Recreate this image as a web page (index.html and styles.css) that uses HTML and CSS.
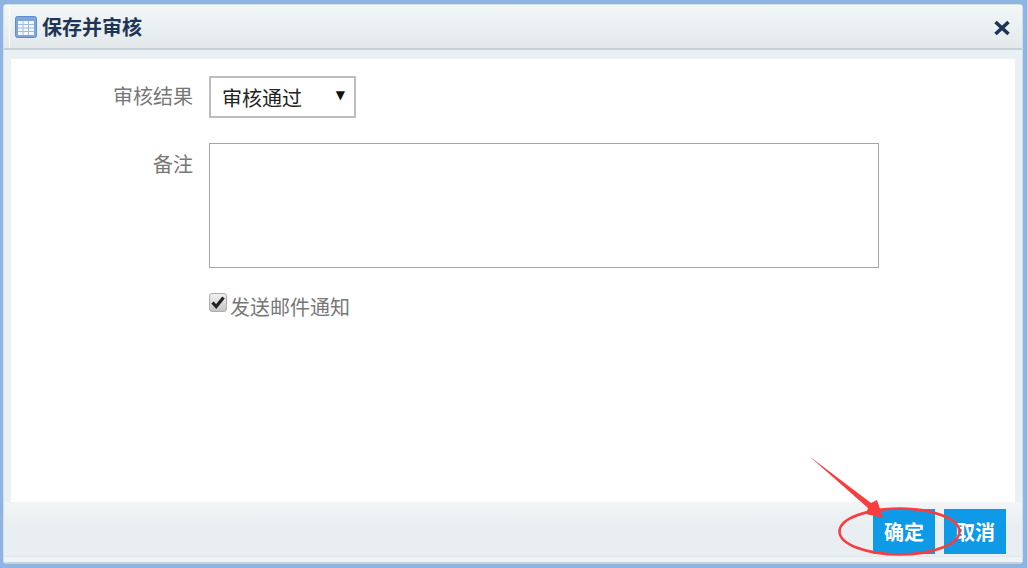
FILE: index.html
```html
<!DOCTYPE html>
<html lang="zh-CN">
<head>
<meta charset="utf-8">
<title>保存并审核</title>
<link rel="stylesheet" href="styles.css">
</head>
<body>
<div class="window">
  <div class="dialog">
    <header class="titlebar">
      <div class="title">
        <svg class="title-icon" width="22" height="22" viewBox="0 0 22 22">
          <rect x="0.5" y="0.5" width="21" height="21" rx="2" fill="#7ea6dd" stroke="#5f8ccb"/>
          <rect x="3" y="5" width="16" height="14" fill="#f4f8fd"/>
          <path d="M3 8.5h16M3 12h16M3 15.5h16M8 5v14M13.5 5v14" stroke="#9dbbe3" stroke-width="1" fill="none"/>
        </svg>
        <span>保存并审核</span>
      </div>
      <svg class="close" width="18" height="16" viewBox="0 0 18 16">
        <path d="M2.5 2 L15.5 14 M15.5 2 L2.5 14" stroke="#1b3556" stroke-width="3.6" fill="none"/>
      </svg>
    </header>
    <div class="gap"></div>
    <main class="content">
      <div class="row row-select">
        <label class="label">审核结果</label>
        <div class="select-box">
          <span>审核通过</span>
          <span class="caret">▼</span>
        </div>
      </div>
      <div class="row row-note">
        <label class="label">备注</label>
        <textarea class="note"></textarea>
      </div>
      <div class="row row-check">
        <span class="check">
          <svg width="14" height="13" viewBox="0 0 14 13"><path d="M1.5 6.5 L5.2 10.5 L12.5 1.5" stroke="#222" stroke-width="3.2" fill="none"/></svg>
        </span>
        <span class="check-text">发送邮件通知</span>
      </div>
    </main>
    <footer class="footer">
      <div class="actions">
        <button class="btn">确定</button>
        <button class="btn">取消</button>
      </div>
      <div class="footer-strip"></div>
    </footer>
  </div>
  <svg class="annotation" width="1027" height="568" viewBox="0 0 1027 568">
    <path d="M809 456 L871 503 L877 500 L883 518 L866 514 L868 508 Z" fill="#f93c3c"/>
    <ellipse cx="899.5" cy="531.5" rx="60" ry="23" fill="none" stroke="#f93c3c" stroke-width="2.6"/>
  </svg>
</div>
</body>
</html>
```
FILE: styles.css
```css
* { box-sizing: border-box; }
html, body { margin: 0; padding: 0; }
body {
  width: 1027px;
  height: 568px;
  overflow: hidden;
  background: #fff;
  font-family: "Noto Sans CJK SC", "Liberation Sans", sans-serif;
}
.window {
  position: relative;
  width: 1027px;
  height: 568px;
  padding: 4px 4px 4px 3px;
  background: #8fb3e2;
}
.dialog {
  height: 100%;
  display: flex;
  flex-direction: column;
  background: #ebf0f4;
  border: 1px solid #d3e0e4;
  border-bottom: 2px solid #c6d4da;
  border-radius: 4px 4px 3px 3px;
}
.titlebar {
  height: 45px;
  flex: none;
  display: flex;
  align-items: center;
  justify-content: space-between;
  padding: 0 11px;
  background:
    linear-gradient(#fafcfc, #fafcfc) 5px 0 / 1px 100% no-repeat,
    linear-gradient(#f2f6f7, #e3e9eb);
  border-bottom: 2px solid #c3d2d9;
}
.title {
  display: flex;
  align-items: center;
  gap: 5px;
  font-size: 20px;
  font-weight: 700;
  color: #1f3557;
  line-height: 26px;
}
.title-icon { flex: none; }
.close { flex: none; margin-top: 2px; }
.gap { height: 9px; flex: none; }
.content {
  flex: 1;
  margin: 0 7px;
  background: #fff;
  padding-top: 17px;
}
.row { display: flex; }
.label {
  width: 182px;
  text-align: right;
  font-size: 20px;
  line-height: 28px;
  color: #777;
  flex: none;
}
.select-box {
  width: 147px;
  height: 42px;
  margin-left: 16px;
  border: 2px solid #bdbdbd;
  display: flex;
  align-items: center;
  justify-content: space-between;
  padding: 0 9px 0 11px;
  font-size: 20px;
  color: #222;
}
.caret {
  font-size: 12px;
  line-height: 14px;
  margin-top: -4px;
  color: #111;
  font-family: "DejaVu Sans", sans-serif;
}
.row-select .label { padding-top: 6px; }
.row-note { margin-top: 25px; }
.row-note .label { padding-top: 7px; }
.note {
  display: block;
  width: 670px;
  height: 125px;
  margin: 0 0 0 16px;
  border: 1px solid #a6a6a6;
  background: #fff;
  resize: none;
  outline: none;
}
.row-check {
  margin: 24px 0 0 198px;
  align-items: flex-start;
}
.check {
  width: 18px;
  height: 19px;
  margin-top: 1px;
  display: flex;
  align-items: center;
  justify-content: center;
  background: linear-gradient(#f2f2f2, #c4c4c4);
  border: 1px solid #adadad;
  border-radius: 3px;
  flex: none;
}
.check-text {
  margin: 1px 0 0 3px;
  font-size: 20px;
  line-height: 28px;
  color: #777;
}
.footer {
  height: 60px;
  flex: none;
  display: flex;
  flex-direction: column;
  background: linear-gradient(#f1f5f6, #e9eef2 40%);
}
.actions {
  flex: 1;
  display: flex;
  justify-content: flex-end;
  gap: 9px;
  padding: 7px 16px 0 0;
}
.footer-strip {
  height: 6px;
  flex: none;
  background: #eef3f5;
  border-top: 1px solid #dfe7ea;
}
.btn {
  width: 62px;
  height: 45px;
  border: 0;
  padding: 0;
  background: #0f9ae8;
  color: #fff;
  font-family: inherit;
  font-size: 20px;
  font-weight: 700;
}
.annotation {
  position: absolute;
  left: 0;
  top: 0;
  pointer-events: none;
}
```
